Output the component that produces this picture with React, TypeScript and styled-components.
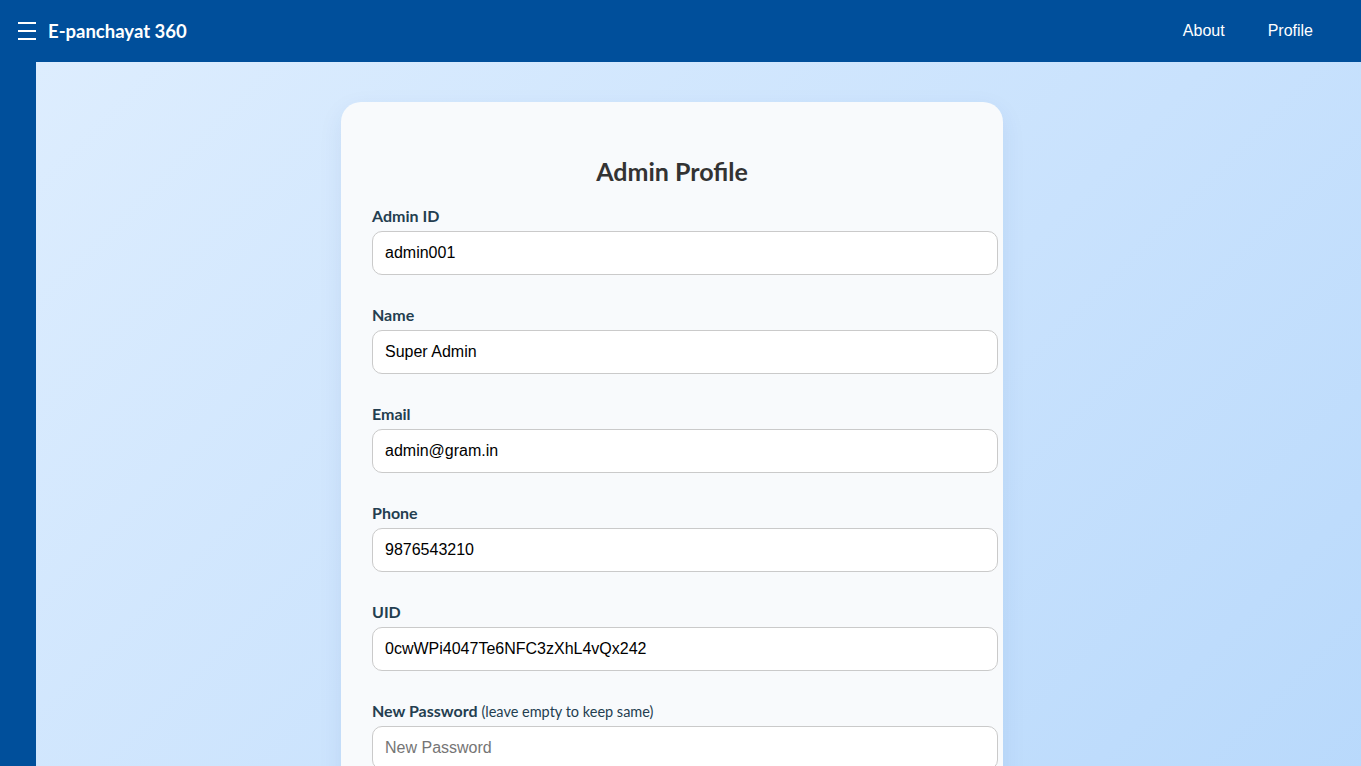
import React from 'react';
import styled, { createGlobalStyle } from 'styled-components';

const GlobalStyle = createGlobalStyle`
  html, body {
    margin: 0;
    padding: 0;
  }
  body {
    font-family: Lato, "Open Sans", sans-serif;
    background: #004f9b;
  }
  * {
    box-sizing: content-box;
  }
`;

const Header = styled.header`
  height: 62px;
  background: #004f9b;
  display: flex;
  align-items: center;
  justify-content: space-between;
  padding: 0 48px 0 18px;
  color: #fff;
`;

const Brand = styled.div`
  display: flex;
  align-items: center;
  gap: 12px;
  font-family: Lato, sans-serif;
  font-weight: 700;
  font-size: 18.5px;
`;

const Burger = styled.button`
  width: 18px;
  height: 18px;
  padding: 0;
  border: 0;
  background: transparent;
  display: flex;
  flex-direction: column;
  justify-content: space-between;
  cursor: pointer;

  span {
    display: block;
    height: 2px;
    background: #fff;
  }
`;

const Nav = styled.nav`
  display: flex;
  gap: 43px;

  a {
    color: #fff;
    text-decoration: none;
    font-family: "Liberation Sans", Arial, sans-serif;
    font-size: 16px;
  }
`;

const Body = styled.div`
  display: flex;
`;

const Sidebar = styled.aside`
  width: 36px;
  flex-shrink: 0;
  background: #004f9b;
`;

const Main = styled.main`
  flex: 1;
  min-height: 920px;
  padding: 40px 53px 60px 0;
  background: linear-gradient(135deg, #ddedfe 0%, #c9e2fd 50%, #b3d6fb 100%);
  display: flex;
  justify-content: center;
  align-items: flex-start;
`;

const Card = styled.section`
  width: 600px;
  padding: 54px 31px 40px;
  background: #f8fafc;
  border-radius: 20px;
  box-shadow: 0 8px 24px rgba(0, 60, 140, 0.08);
`;

const Title = styled.h2`
  margin: 0 0 20px;
  text-align: center;
  font-family: Lato, sans-serif;
  font-size: 25px;
  font-weight: 700;
  color: #333;
`;

const Field = styled.div`
  margin-bottom: 30px;
`;

const Label = styled.label`
  display: block;
  margin-bottom: 6px;
  font-family: Lato, sans-serif;
  font-weight: 700;
  font-size: 16px;
  color: #243e50;

  small {
    font-weight: 400;
    font-size: 14.5px;
  }
`;

const Input = styled.input`
  display: block;
  width: 100%;
  height: 20px;
  padding: 11px 12px;
  border: 1px solid #cacaca;
  border-radius: 10px;
  background: #fff;
  font-family: "Liberation Sans", Arial, sans-serif;
  font-size: 16px;
  color: #000;
  outline: none;

  &::placeholder {
    color: #757575;
  }
`;

const Submit = styled.button`
  display: block;
  width: 100%;
  padding: 12px;
  border: 0;
  border-radius: 10px;
  background: #004f9b;
  color: #fff;
  font-family: Lato, sans-serif;
  font-weight: 700;
  font-size: 16px;
  cursor: pointer;
`;

const fields = [
  { label: 'Admin ID', value: 'admin001' },
  { label: 'Name', value: 'Super Admin' },
  { label: 'Email', value: 'admin@gram.in' },
  { label: 'Phone', value: '9876543210' },
  { label: 'UID', value: '0cwWPi4047Te6NFC3zXhL4vQx242' },
];

export default function App() {
  return (
    <>
      <GlobalStyle />
      <Header>
        <Brand>
          <Burger aria-label='menu'>
            <span />
            <span />
            <span />
          </Burger>
          E-panchayat 360
        </Brand>
        <Nav>
          <a href='#about'>About</a>
          <a href='#profile'>Profile</a>
        </Nav>
      </Header>
      <Body>
        <Sidebar />
        <Main>
          <Card>
            <Title>Admin Profile</Title>
            {fields.map((f) => (
              <Field key={f.label}>
                <Label>{f.label}</Label>
                <Input defaultValue={f.value} />
              </Field>
            ))}
            <Field>
              <Label>
                New Password <small>(leave empty to keep same)</small>
              </Label>
              <Input type='password' placeholder='New Password' />
            </Field>
            <Submit>Update Profile</Submit>
          </Card>
        </Main>
      </Body>
    </>
  );
}
